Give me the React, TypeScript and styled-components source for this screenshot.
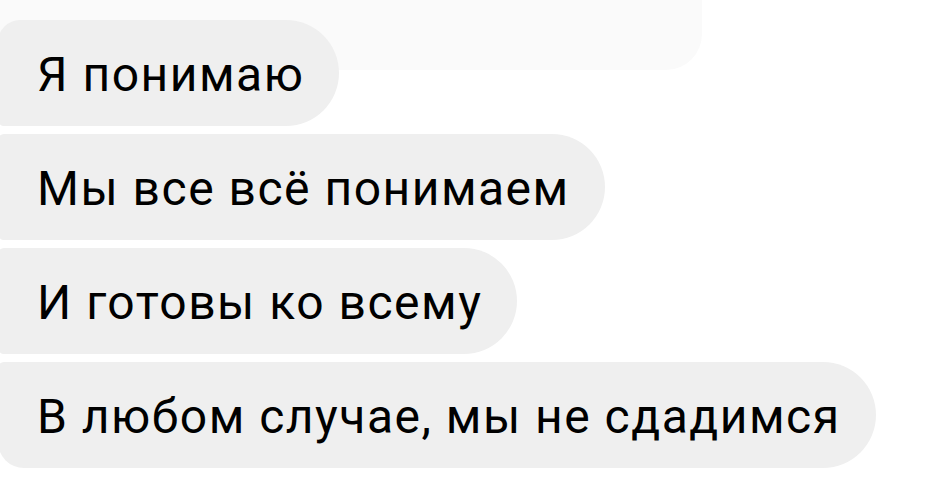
import React from 'react';
import styled, {createGlobalStyle} from 'styled-components';

const GlobalStyle = createGlobalStyle`
  html, body {
    margin: 0;
    padding: 0;
    background: #ffffff;
  }
  body {
    font-family: Roboto, "Noto Sans", "Liberation Sans", sans-serif;
    overflow: hidden;
  }
`;

const Screen = styled.div`
  width: 947px;
  height: 497px;
  overflow: hidden;
  background: #ffffff;
`;

// Previous message, mostly scrolled out of view and faded.
const FadedBubble = styled.div`
  width: 740px;
  height: 70px;
  margin-left: -38px;
  background: #fafafa;
  border-bottom-right-radius: 36px;
`;

const Thread = styled.div`
  display: flex;
  flex-direction: column;
  align-items: flex-start;
  gap: 8px;
  margin-top: -50px;
  margin-left: -2px;
`;

type Position = 'first' | 'middle' | 'last';

const Bubble = styled.div<{$position: Position}>`
  display: flex;
  align-items: center;
  box-sizing: border-box;
  height: 106px;
  padding: 4px 35px 0 39px;
  background: #efefef;
  color: #000000;
  font-size: 48px;
  letter-spacing: 1.5px;
  line-height: 1;
  white-space: nowrap;
  border-radius: ${({$position}) =>
    $position === 'first'
      ? '22px 53px 53px 6px'
      : $position === 'last'
        ? '6px 53px 53px 26px'
        : '6px 53px 53px 6px'};
`;

const messages = [
  'Я понимаю',
  'Мы все всё понимаем',
  'И готовы ко всему',
  'В любом случае, мы не сдадимся',
];

export default function App() {
  return (
    <Screen>
      <GlobalStyle />
      <FadedBubble />
      <Thread>
        {messages.map((text, i) => (
          <Bubble
            key={text}
            $position={i === 0 ? 'first' : i === messages.length - 1 ? 'last' : 'middle'}
          >
            {text}
          </Bubble>
        ))}
      </Thread>
    </Screen>
  );
}
